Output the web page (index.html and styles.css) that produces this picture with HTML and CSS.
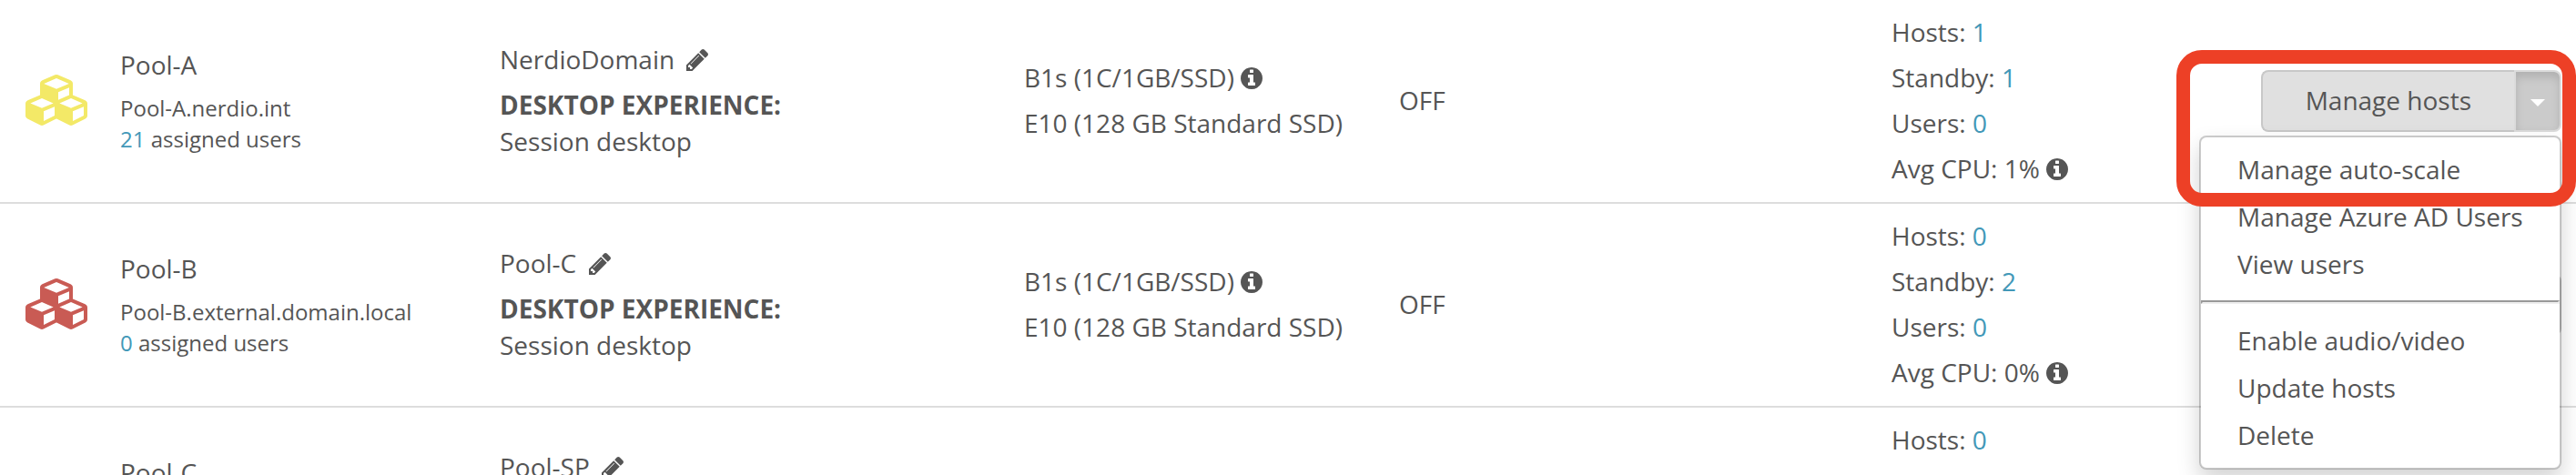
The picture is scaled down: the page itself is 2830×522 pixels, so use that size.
FILE: index.html
```html
<!DOCTYPE html>
<html lang="en">
<head>
    <meta charset="UTF-8">
    <meta name="viewport" content="width=device-width, initial-scale=1.0">
    <title>Host pools</title>
    <link rel="stylesheet" href="styles.css">
</head>
<body>
    <!-- shared icons -->
    <svg class="sprite" aria-hidden="true">
        <symbol id="icon-cubes" viewBox="0 0 2176 1792">
            <path fill="currentColor" d="M640 1632l384-192v-314l-384 164v342zm-64-454l404-173-404-173-404 173zm1088 454l384-192v-314l-384 164v342zm-64-454l404-173-404-173-404 173zm-448-293l384-165v-266l-384 164v267zm-64-379l441-189-441-189-441 189zm1088 518v416q0 36-19 67t-52 47l-448 224q-25 14-57 14t-57-14l-448-224q-4-2-7-4-2 2-7 4l-448 224q-25 14-57 14t-57-14l-448-224q-33-16-52-47t-19-67v-416q0-38 21.5-70t56.5-48l434-186v-400q0-38 21.5-70t56.5-48l448-192q23-10 50-10t50 10l448 192q35 16 56.5 48t21.5 70v400l434 186q36 16 57 48t21 70z"/>
        </symbol>
        <symbol id="icon-pencil" viewBox="128 148 1516 1516">
            <path fill="currentColor" d="M491 1536l91-91-235-235-91 91v107h128v128h107zm523-928q0-22-22-22-10 0-17 7l-542 542q-7 7-7 17 0 22 22 22 10 0 17-7l542-542q7-7 7-17zm-54-192l416 416-832 832h-416v-416zm683 96q0 53-37 90l-166 166-416-416 166-165q36-38 90-38 53 0 91 38l235 234q37 39 37 91z"/>
        </symbol>
        <symbol id="icon-info" viewBox="128 128 1536 1536">
            <path fill="currentColor" d="M1152 1376v-160q0-14-9-23t-23-9h-96v-512q0-14-9-23t-23-9h-320q-14 0-23 9t-9 23v160q0 14 9 23t23 9h96v320h-96q-14 0-23 9t-9 23v160q0 14 9 23t23 9h448q14 0 23-9t9-23zm-128-896v-160q0-14-9-23t-23-9h-192q-14 0-23 9t-9 23v160q0 14 9 23t23 9h192q14 0 23-9t9-23zm640 416q0 209-103 385.5t-279.5 279.5-385.5 103-385.5-103-279.5-279.5-103-385.5 103-385.5 279.5-279.5 385.5-103 385.5 103 279.5 279.5 103 385.5z"/>
        </symbol>
    </svg>

    <div class="page">
        <table class="pools">
            <colgroup>
                <col class="col-icon">
                <col class="col-name">
                <col class="col-domain">
                <col class="col-size">
                <col class="col-status">
                <col>
                <col class="col-actions">
            </colgroup>
            <tbody>
                <tr>
                    <td class="icon-cell yellow"><svg class="cubes"><use href="#icon-cubes"/></svg></td>
                    <td class="name-cell">
                        <p>Pool-A</p>
                        <p class="small">Pool-A.nerdio.int<br><a href="#">21</a> assigned users</p>
                    </td>
                    <td class="domain-cell">
                        <p>NerdioDomain <a href="#" class="edit" aria-label="Edit"><svg class="icon"><use href="#icon-pencil"/></svg></a></p>
                        <p><strong>DESKTOP EXPERIENCE:</strong><br>Session desktop</p>
                    </td>
                    <td class="size-cell">
                        <p>B1s (1C/1GB/SSD) <svg class="icon"><use href="#icon-info"/></svg></p>
                        <p>E10 (128 GB Standard SSD)</p>
                    </td>
                    <td class="status-cell">OFF</td>
                    <td class="stats-cell">
                        <p>Hosts: <a href="#">1</a></p>
                        <p>Standby: <a href="#">1</a></p>
                        <p>Users: <a href="#">0</a></p>
                        <p>Avg CPU: 1% <svg class="icon"><use href="#icon-info"/></svg></p>
                    </td>
                    <td class="actions-cell">
                        <div class="btn-group">
                            <button type="button" class="btn">Manage hosts</button>
                            <button type="button" class="btn toggle open" aria-label="More actions"><span class="caret"></span></button>
                            <div class="menu">
                                <a href="#">Manage auto-scale</a>
                                <a href="#">Manage Azure AD Users</a>
                                <a href="#">View users</a>
                                <hr>
                                <a href="#">Enable audio/video</a>
                                <a href="#">Update hosts</a>
                                <a href="#">Delete</a>
                            </div>
                            <div class="highlight"></div>
                        </div>
                    </td>
                </tr>
                <tr>
                    <td class="icon-cell red"><svg class="cubes"><use href="#icon-cubes"/></svg></td>
                    <td class="name-cell">
                        <p>Pool-B</p>
                        <p class="small">Pool-B.external.domain.local<br><a href="#">0</a> assigned users</p>
                    </td>
                    <td class="domain-cell">
                        <p>Pool-C <a href="#" class="edit" aria-label="Edit"><svg class="icon"><use href="#icon-pencil"/></svg></a></p>
                        <p><strong>DESKTOP EXPERIENCE:</strong><br>Session desktop</p>
                    </td>
                    <td class="size-cell">
                        <p>B1s (1C/1GB/SSD) <svg class="icon"><use href="#icon-info"/></svg></p>
                        <p>E10 (128 GB Standard SSD)</p>
                    </td>
                    <td class="status-cell">OFF</td>
                    <td class="stats-cell">
                        <p>Hosts: <a href="#">0</a></p>
                        <p>Standby: <a href="#">2</a></p>
                        <p>Users: <a href="#">0</a></p>
                        <p>Avg CPU: 0% <svg class="icon"><use href="#icon-info"/></svg></p>
                    </td>
                    <td class="actions-cell">
                        <div class="btn-group">
                            <button type="button" class="btn toggle" aria-label="More actions"><span class="caret"></span></button>
                        </div>
                    </td>
                </tr>
                <tr>
                    <td></td>
                    <td class="name-cell"><p>Pool-C</p></td>
                    <td class="domain-cell">
                        <p>Pool-SP <a href="#" class="edit" aria-label="Edit"><svg class="icon"><use href="#icon-pencil"/></svg></a></p>
                    </td>
                    <td></td>
                    <td></td>
                    <td class="stats-cell"><p>Hosts: <a href="#">0</a></p></td>
                    <td></td>
                </tr>
            </tbody>
        </table>
    </div>
</body>
</html>
```
FILE: styles.css
```css
* {
    box-sizing: border-box;
}
body {
    margin: 0;
    font-family: 'Open Sans', sans-serif;
    font-size: 28px;
    line-height: 40px;
    color: #555;
    background-color: #fff;
}
.sprite {
    display: none;
}
.page {
    height: 100vh;
    overflow: hidden;
}
.pools {
    width: 100%;
    table-layout: fixed;
    border-collapse: separate;
    border-spacing: 0;
}
.col-icon {
    width: 132px;
}
.col-name {
    width: 417px;
}
.col-domain {
    width: 576px;
}
.col-size {
    width: 412px;
}
.col-status {
    width: 541px;
}
.col-actions {
    width: 439px;
}
td {
    height: 224px;
    padding: 0;
    vertical-align: top;
    border-bottom: 2px solid #ddd;
}
p {
    margin: 0 0 10px;
}
a {
    color: #4298b8;
    text-decoration: none;
}
.small {
    margin-top: 11px;
    font-size: 24px;
    line-height: 34px;
}
.pools .icon-cell {
    padding: 82px 0 0 28px;
}
.pools .name-cell {
    padding-top: 51px;
}
.pools .domain-cell {
    padding-top: 45px;
}
.pools .size-cell {
    padding-top: 65px;
}
.pools .status-cell {
    padding-top: 90px;
}
.pools .stats-cell {
    padding-top: 15px;
}
.pools .actions-cell {
    padding: 77px 16px 0 0;
}

/* icons */
.cubes {
    display: block;
    width: 68px;
    height: 56px;
}
.icon {
    width: 24px;
    height: 24px;
    vertical-align: -2px;
}
.edit {
    margin-left: 6px;
    color: #555;
}
.yellow {
    color: #f3e967;
}
.red {
    color: #c95b54;
}

/* split button */
.btn-group {
    position: relative;
    display: flex;
    justify-content: flex-end;
}
.btn {
    height: 68px;
    padding: 0 47px 2px;
    font: inherit;
    color: #555;
    background-color: #e0e0e0;
    border: 2px solid #c8c8c8;
    border-right: none;
    border-radius: 8px 0 0 8px;
    cursor: pointer;
}
.toggle {
    padding: 4px 16px 0;
    border: 2px solid #ccc;
    border-radius: 0 8px 8px 0;
}
.toggle.open {
    background-color: #cbcbcb;
    border-color: #dbdbdb;
    box-shadow: inset 0 6px 10px rgba(0, 0, 0, 0.125);
}
.caret {
    display: block;
    border-top: 8px solid #fff;
    border-left: 8px solid transparent;
    border-right: 8px solid transparent;
}

/* dropdown */
.menu {
    position: absolute;
    top: 72px;
    right: 0;
    z-index: 1;
    width: 398px;
    padding: 9px 0 10px;
    background-color: #fff;
    background-clip: padding-box;
    border: 2px solid rgba(0, 0, 0, 0.2);
    border-radius: 8px;
    box-shadow: 0 12px 24px rgba(0, 0, 0, 0.175);
}
.menu a {
    display: block;
    padding: 6px 40px;
    color: #555;
}
.menu hr {
    margin: 14px 0;
    border: 2px solid #eee;
    border-top-color: #999;
    border-left-color: #999;
}
.highlight {
    position: absolute;
    top: -22px;
    right: -16px;
    z-index: 2;
    width: 439px;
    height: 172px;
    border: 15px solid #ed4026;
    border-radius: 28px;
    pointer-events: none;
}
```
